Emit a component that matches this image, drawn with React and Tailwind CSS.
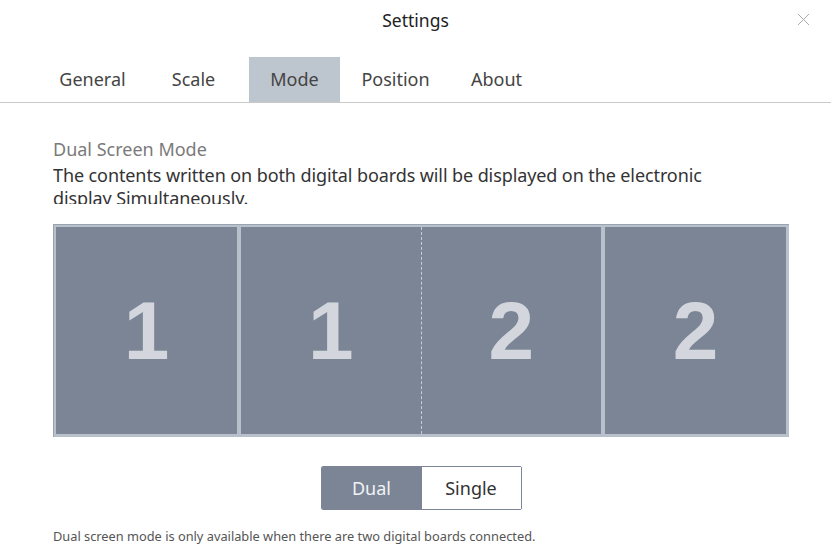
import { X } from "lucide-react";

const tabs = ["General", "Scale", "Mode", "Position", "About"];

function Board({ digit, className = "" }) {
  return (
    <div className={"flex items-center justify-center " + className}>
      <span className="font-['Liberation_Sans',Arial,sans-serif] text-[82px] font-bold leading-none text-[#d3d7dd]">
        {digit}
      </span>
    </div>
  );
}

export default function App() {
  return (
    <div className="relative w-[831px] h-[548px] overflow-hidden bg-white text-[#333] font-['Noto_Sans','Open_Sans',sans-serif]">
      <header className="h-[40px] flex items-center justify-center text-[17.5px] text-[#222]">
        Settings
      </header>
      <button className="absolute right-[17px] top-[9px] text-[#a0a0a0]">
        <X size={21} strokeWidth={1} />
      </button>

      <nav className="mt-[17px] h-[46px] flex gap-[10px] pl-[47px] border-b border-[#c9c9c9]">
        {tabs.map((t) => (
          <div
            key={t}
            className={
              "w-[91px] h-[45px] flex items-center justify-center text-[18px] text-[#444] " +
              (t === "Mode" ? "bg-[#bdc5cf]" : "")
            }
          >
            {t}
          </div>
        ))}
      </nav>

      <main className="px-[53px]">
        <p className="mt-[34px] text-[18px] leading-[24px] text-[#7a7a7a]">Dual Screen Mode</p>
        {/* the app clips the second line at its baseline */}
        <p className="mt-[3px] h-[40px] overflow-hidden text-[18px] leading-[23px] tracking-[-0.1px] text-[#333] pr-[40px]">
          The contents written on both digital boards will be displayed on the electronic display
          Simultaneously.
        </p>

        <div className="mt-[20px] w-[736px] h-[213px] bg-[#b8c0cc] p-[3px] flex gap-[4px] shadow-[inset_1px_1px_0_#9aa3b0]">
          <Board digit="1" className="w-[181px] bg-[#7b8596]" />
          <div className="w-[360px] flex bg-[#7b8596]">
            <Board digit="1" className="flex-1" />
            <div className="w-0 border-l border-dashed border-[#c9cdd4]" />
            <Board digit="2" className="flex-1" />
          </div>
          <Board digit="2" className="flex-1 bg-[#7b8596]" />
        </div>

        <div className="mt-[29px] w-[736px] flex justify-center">
          <div className="flex h-[44px] rounded-[2px] overflow-hidden border border-[#7b8596]">
            <button className="w-[100px] bg-[#7b8596] text-[18px] text-[#f1f2f4]">Dual</button>
            <button className="w-[99px] bg-white text-[18px] text-[#333]">Single</button>
          </div>
        </div>

        <p className="mt-[17px] text-[12.8px] leading-[18px] text-[#555]">
          Dual screen mode is only available when there are two digital boards connected.
        </p>
      </main>
    </div>
  );
}
